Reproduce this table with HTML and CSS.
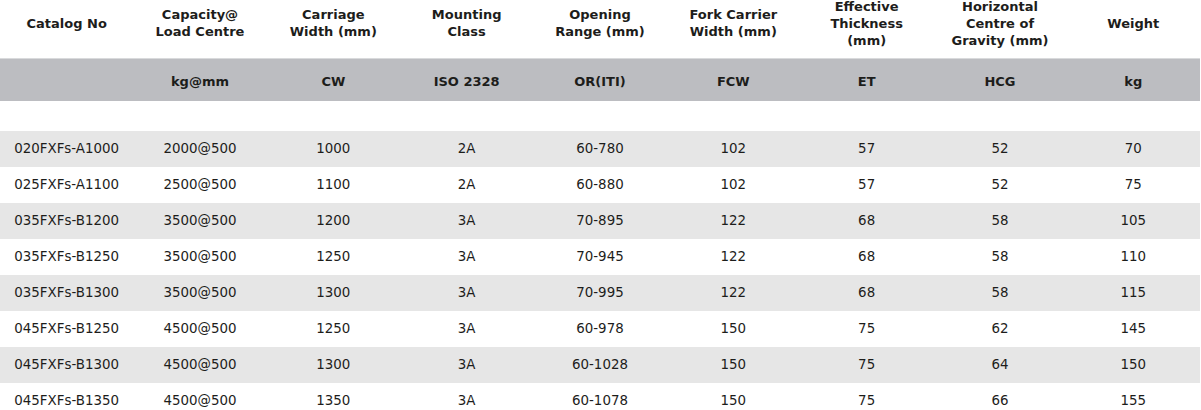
FILE: index.html
```html
<!DOCTYPE html>
<html>
<head>
<meta charset="utf-8">
<link rel="stylesheet" href="styles.css">
</head>
<body>
<table class="spec">
  <thead>
    <tr class="head">
      <th><div class="hd">Catalog No</div></th>
      <th><div class="hd">Capacity@<br>Load Centre</div></th>
      <th><div class="hd">Carriage<br>Width (mm)</div></th>
      <th><div class="hd">Mounting<br>Class</div></th>
      <th><div class="hd">Opening<br>Range (mm)</div></th>
      <th><div class="hd">Fork Carrier<br>Width (mm)</div></th>
      <th><div class="hd">Effective<br>Thickness<br>(mm)</div></th>
      <th><div class="hd">Horizontal<br>Centre of<br>Gravity (mm)</div></th>
      <th><div class="hd">Weight</div></th>
    </tr>
    <tr class="units">
      <th></th>
      <th>kg@mm</th>
      <th>CW</th>
      <th>ISO 2328</th>
      <th>OR(ITI)</th>
      <th>FCW</th>
      <th>ET</th>
      <th>HCG</th>
      <th>kg</th>
    </tr>
    <tr class="spacer"><td colspan="9"></td></tr>
  </thead>
  <tbody>
    <tr class="alt"><td>020FXFs-A1000</td><td>2000@500</td><td>1000</td><td>2A</td><td>60-780</td><td>102</td><td>57</td><td>52</td><td>70</td></tr>
    <tr><td>025FXFs-A1100</td><td>2500@500</td><td>1100</td><td>2A</td><td>60-880</td><td>102</td><td>57</td><td>52</td><td>75</td></tr>
    <tr class="alt"><td>035FXFs-B1200</td><td>3500@500</td><td>1200</td><td>3A</td><td>70-895</td><td>122</td><td>68</td><td>58</td><td>105</td></tr>
    <tr><td>035FXFs-B1250</td><td>3500@500</td><td>1250</td><td>3A</td><td>70-945</td><td>122</td><td>68</td><td>58</td><td>110</td></tr>
    <tr class="alt"><td>035FXFs-B1300</td><td>3500@500</td><td>1300</td><td>3A</td><td>70-995</td><td>122</td><td>68</td><td>58</td><td>115</td></tr>
    <tr><td>045FXFs-B1250</td><td>4500@500</td><td>1250</td><td>3A</td><td>60-978</td><td>150</td><td>75</td><td>62</td><td>145</td></tr>
    <tr class="alt"><td>045FXFs-B1300</td><td>4500@500</td><td>1300</td><td>3A</td><td>60-1028</td><td>150</td><td>75</td><td>64</td><td>150</td></tr>
    <tr><td>045FXFs-B1350</td><td>4500@500</td><td>1350</td><td>3A</td><td>60-1078</td><td>150</td><td>75</td><td>66</td><td>155</td></tr>
  </tbody>
</table>
</body>
</html>
```

FILE: styles.css
```css
html, body {
  margin: 0;
  padding: 0;
  background: #ffffff;
}

body {
  font-family: "DejaVu Sans", "Liberation Sans", sans-serif;
  color: #1d1d1b;
}

.spec {
  width: 1200px;
  border-collapse: collapse;
  table-layout: fixed;
}

.spec th,
.spec td {
  padding: 0;
  text-align: center;
  vertical-align: middle;
}

.head th {
  height: 58px;
  box-sizing: border-box;
  padding-bottom: 12px;
  vertical-align: top;
  font-size: 13px;
  font-weight: bold;
  line-height: 17px;
}

.hd {
  height: 46px;
  display: flex;
  flex-direction: column;
  justify-content: center;
  align-items: center;
  overflow: visible;
}

.units th {
  height: 42px;
  background: #bcbdc1;
  font-size: 13px;
  font-weight: bold;
  line-height: 17px;
  padding-top: 3px;
  box-sizing: border-box;
  border-top: 1px solid #d9dadc;
}

.spacer td {
  height: 30px;
}

tbody td {
  height: 36px;
  font-size: 13.4px;
  line-height: 17px;
  padding-top: 7px;
  box-sizing: border-box;
}

tbody tr.alt td {
  background: #e6e6e6;
}
```
